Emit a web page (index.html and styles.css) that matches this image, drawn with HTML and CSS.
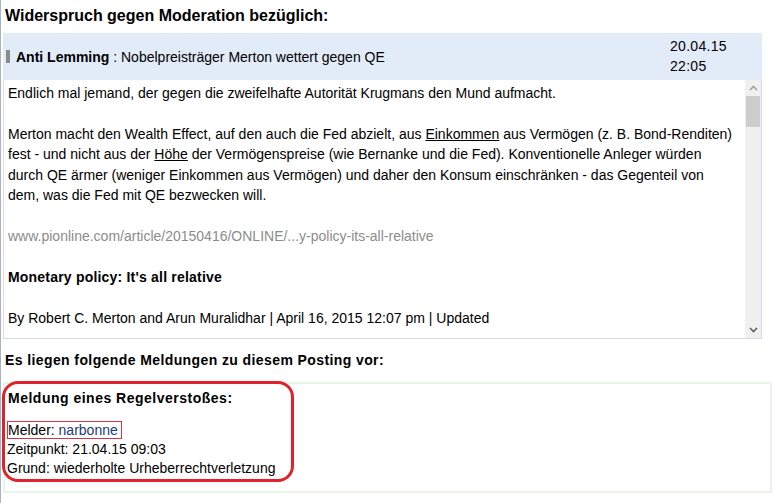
FILE: index.html
```html
<!DOCTYPE html>
<html lang="de">
<head>
<meta charset="utf-8">
<title>Widerspruch gegen Moderation</title>
<link rel="stylesheet" href="styles.css">
</head>
<body>
<div class="page">
  <h1 class="title">Widerspruch gegen Moderation bezüglich:</h1>

  <div class="post-head">
    <div class="post-subject">
      <span class="bar"></span>
      <span class="author">Anti Lemming</span>
      <span class="subject">&nbsp;: Nobelpreisträger Merton wettert gegen QE</span>
    </div>
    <div class="post-date">20.04.15<br>22:05</div>
  </div>

  <div class="post-body">
    <div class="post-text">
      Endlich mal jemand, der gegen die zweifelhafte Autorität Krugmans den Mund aufmacht.<br><br>
      Merton macht den Wealth Effect, auf den auch die Fed abzielt, aus <u>Einkommen</u> aus Vermögen (z. B. Bond-Renditen) fest - und nicht aus der <u>Höhe</u> der Vermögenspreise (wie Bernanke und die Fed). Konventionelle Anleger würden durch QE ärmer (weniger Einkommen aus Vermögen) und daher den Konsum einschränken - das Gegenteil von dem, was die Fed mit QE bezwecken will.<br><br>
      <span class="link">www.pionline.com/article/20150416/ONLINE/...y-policy-its-all-relative</span><br><br>
      <b class="spaced">Monetary policy: It's all relative</b><br><br>
      By Robert C. Merton and Arun Muralidhar | April 16, 2015 12:07 pm | Updated<br><br>
      The financial crisis and its aftermath have placed the Federal Reserve front and center in the economy.
    </div>
    <div class="scrollbar">
      <div class="sb-arrow">
        <svg width="9" height="6" viewBox="0 0 9 6"><path d="M1 5 L4.5 1.5 L8 5" fill="none" stroke="#a3a3a3" stroke-width="1.6"/></svg>
      </div>
      <div class="sb-thumb"></div>
      <div class="sb-track"></div>
      <div class="sb-arrow">
        <svg width="9" height="6" viewBox="0 0 9 6"><path d="M1 1 L4.5 4.5 L8 1" fill="none" stroke="#606060" stroke-width="1.6"/></svg>
      </div>
    </div>
  </div>

  <h2 class="reports-title">Es liegen folgende Meldungen zu diesem Posting vor:</h2>

  <div class="report">
    <div class="report-head">Meldung eines Regelverstoßes:</div>
    <div class="report-lines">
      <span class="reporter">Melder: <span class="user">narbonne</span></span><br>
      Zeitpunkt: 21.04.15 09:03<br>
      Grund: wiederholte Urheberrechtverletzung
    </div>
    <div class="ring"></div>
  </div>
</div>
</body>
</html>
```

FILE: styles.css
```css
html, body {
  margin: 0;
  padding: 0;
  background: #ffffff;
}
body {
  font-family: "Liberation Sans", Arial, sans-serif;
  font-size: 14px;
  color: #000;
}
.page {
  border-left: 1px solid #a9b1c2;
  padding: 6px 4px 0 2px;
  min-height: 497px;
}
.title {
  margin: 0 0 7px 2px;
  font-size: 16px;
  line-height: 20px;
  font-weight: bold;
}
.post-head {
  width: 759px;
  height: 47px;
  box-sizing: border-box;
  background: #e2ebf8;
  display: flex;
  align-items: center;
  padding: 0 0 0 3px;
}
.post-subject {
  flex: 1;
  display: flex;
  align-items: center;
}
.bar {
  width: 4px;
  height: 13px;
  background: #8a8a8a;
  margin-right: 6px;
}
.author {
  font-weight: bold;
}
.post-date {
  width: 92px;
  line-height: 20px;
  margin-top: -1px;
  letter-spacing: 0.3px;
}
.post-body {
  width: 759px;
  height: 259px;
  box-sizing: border-box;
  border: 1px solid #d9d9ea;
  border-top: none;
  display: flex;
  overflow: hidden;
}
.post-text {
  flex: 1;
  padding: 3px 8px 0 4px;
  line-height: 20.45px;
  overflow: hidden;
}
.post-text u {
  text-decoration: underline;
}
.link {
  color: #8c8c8c;
}
.spaced {
  letter-spacing: 0.2px;
}
.scrollbar {
  width: 16px;
  background: #f0f0f0;
  display: flex;
  flex-direction: column;
}
.sb-arrow {
  height: 16px;
  display: flex;
  align-items: center;
  justify-content: center;
}
.sb-thumb {
  height: 31px;
  margin: 0 1px;
  background: #cdcdcd;
}
.sb-track {
  flex: 1;
}
.reports-title {
  margin: 11px 0 12px 2px;
  font-size: 14px;
  line-height: 20px;
  font-weight: bold;
  letter-spacing: 0.4px;
}
.report {
  position: relative;
  width: 769px;
  height: 111px;
  box-sizing: border-box;
  border: 2px solid #e6f6e6;
  padding: 5px 0 0 2px;
}
.report-head {
  font-weight: bold;
  letter-spacing: 0.5px;
  line-height: 19px;
  padding-left: 1px;
  margin-bottom: 13px;
}
.report-lines {
  line-height: 19px;
}
.reporter {
  border: 1px solid #d4383e;
  padding: 0 3px 0 0;
}
.user {
  color: #1c3c78;
}
.ring {
  position: absolute;
  left: -3px;
  top: -3px;
  width: 292px;
  height: 101px;
  box-sizing: border-box;
  border: 3.5px solid #e1212b;
  border-radius: 16px;
}
```
